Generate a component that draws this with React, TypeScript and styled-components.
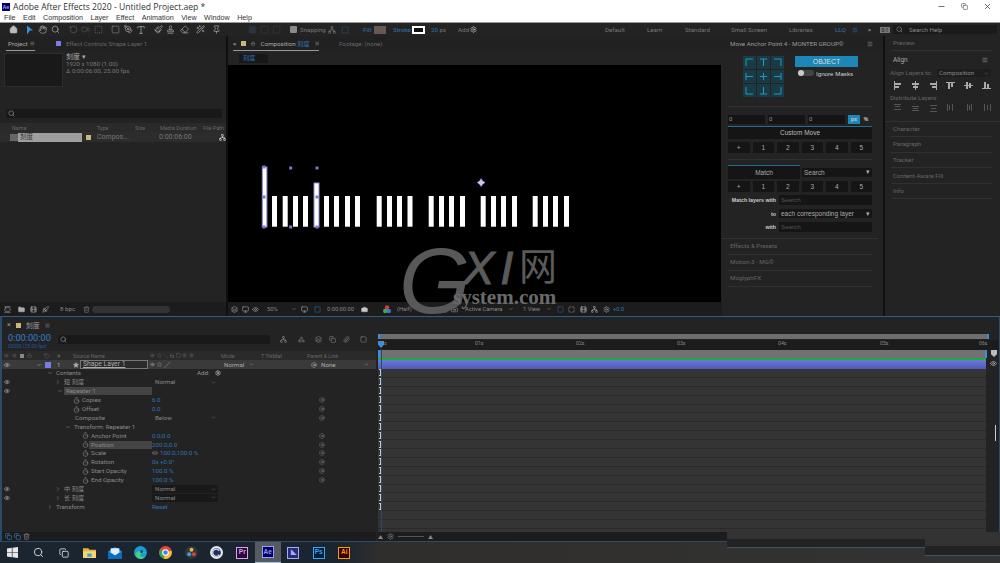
import React from "react";
import styled, { createGlobalStyle } from "styled-components";
import { Home, Hand, Search, RotateCcw, Video, Square, SquareDashed, PenTool, Type, Paintbrush, Stamp, Eraser, Pin, Settings, Menu, Camera, Lock, Eye, Folder, Trash2, Monitor, Film, Rocket, Minus, X, Copy, ChevronDown, ChevronRight, Star, Timer, Link2, Paperclip, Network, Layers, AtSign, WandSparkles, Tag, Shapes, GalleryVertical } from "lucide-react";

const Global = createGlobalStyle`
  html, body { margin: 0; padding: 0; background: #111; }
  * { box-sizing: border-box; }
  body { font-family: Roboto, "Noto Sans CJK SC", sans-serif; }
`;
const Root = styled.div`width:1000px;height:563px;overflow:hidden;display:flex;flex-direction:column;background:#0f0f0f;color:#8c8c8c;font-size:6.2px;position:relative;`;
const TitleBar = styled.div`height:12px;background:#fff;display:flex;align-items:center;padding:1px 0 0 2px;color:#333;font-family:"Open Sans",sans-serif;font-size:8.6px;gap:3px;flex:none;`;
const AeIcon = styled.span`width:8px;height:8px;background:#00005b;color:#99f;font-size:5px;font-weight:700;display:flex;align-items:center;justify-content:center;`;
const WinControls = styled.div`margin-left:auto;display:flex;gap:15px;padding-right:8px;color:#444;align-items:center;`;
const MenuBar = styled.div`height:11px;background:#fff;display:flex;align-items:center;padding-left:4px;gap:7.5px;color:#333;font-family:"Liberation Sans",sans-serif;font-size:7.2px;border-bottom:1px solid #999;flex:none;`;
const Toolbar = styled.div`height:13px;background:#232323;display:flex;align-items:center;padding-left:7px;color:#777;flex:none;`;
const Tool = styled.span<{ $w?: number; $c?: string }>`width:${p=>p.$w??12}px;display:flex;justify-content:center;align-items:center;color:${p=>p.$c??"#bbb"};flex:none;`;
const ToolSep = styled.span<{ $w: number }>`width:${p=>p.$w}px;flex:none;`;
const ToolLabel = styled.span<{ $w: number; $c?: string }>`width:${p=>p.$w}px;flex:none;white-space:nowrap;color:${p=>p.$c??"inherit"};`;
const BlueText = styled.span`color:#2f74b5;`;
const FillSwatch = styled.span`width:12px;height:8px;background:#6a5654;margin:0 7px 0 3px;flex:none;`;
const StrokeSwatch = styled.span`width:13px;height:8px;background:#111;border:2px solid #fff;margin:0 6px 0 1px;flex:none;`;
const Check = styled.span`width:7px;height:7px;background:#8a8a8a;border-radius:1px;margin-right:3px;flex:none;`;
const HelpBox = styled.div`width:104px;height:9px;background:#1a1a1a;display:flex;align-items:center;padding-left:3px;gap:6px;color:#888;margin:0 3px;flex:none;`;
const WorkTabs = styled.div`margin-left:auto;display:flex;align-items:center;color:#777;`;
const ZeroBox = styled.span`width:10px;height:6px;background:#777;color:#111;font-size:5px;line-height:6px;text-align:center;flex:none;`;

const Main = styled.div`height:280px;display:flex;background:#0f0f0f;flex:none;`;
const Panel = styled.div<{ $w: number; $ml?: number }>`width:${p=>p.$w}px;margin-left:${p=>p.$ml??0}px;flex:none;background:#232323;display:flex;flex-direction:column;position:relative;`;
const Tabs = styled.div`height:15px;display:flex;align-items:center;flex:none;background:#212121;`;
const Tab = styled.span<{ $active?: boolean; $w?: number; $gap?: number; $ml?: number }>`display:flex;align-items:center;justify-content:flex-start;gap:${p=>p.$gap??3}px;height:15px;padding-top:1px;margin-left:${p=>p.$ml??0}px;color:${p=>p.$active?"#aaa":"#666"};${p=>p.$w?`width:${p.$w}px;`:""}border-bottom:${p=>p.$active?"1px solid #999":"1px solid transparent"};flex:none;white-space:nowrap;`;
const TabName = styled.span`padding-left:2px;width:25px;`;
const Sq = styled.span<{ $c: string; $s?: number; $ml?: number }>`width:${p=>p.$s??5}px;height:${p=>p.$s??5}px;background:${p=>p.$c};margin-left:${p=>p.$ml??0}px;flex:none;`;
const ProjectInfo = styled.div`display:flex;height:36px;margin:2px 0 0 4px;gap:3px;flex:none;`;
const Thumb = styled.div`width:59px;height:34px;background:#191919;border:1px solid #2c2c2c;`;
const InfoText = styled.div`line-height:7px;color:#777;`;
const InfoTitle = styled.div`color:#aaa;font-size:7px;line-height:8px;`;
const SearchBar = styled.div<{ $w: number; $ml: number; $mt: number }>`width:${p=>p.$w}px;height:9px;margin:${p=>p.$mt}px 0 0 ${p=>p.$ml}px;background:#191919;display:flex;align-items:center;padding-left:2px;color:#999;flex:none;`;
const ProjHeader = styled.div`height:9px;margin-top:5px;background:#2a2a2a;display:grid;grid-template-columns:85px 38px 25px 43px 1fr;padding-left:12px;align-items:center;color:#666;font-size:5.4px;white-space:nowrap;flex:none;`;
const ProjRow = styled.div`height:10px;background:#2c2c2c;display:flex;align-items:center;padding-left:10px;color:#777;font-size:7px;flex:none;`;
const FolderTag = styled.span`width:8px;height:7px;background:#666;flex:none;`;
const ProjName = styled.span`width:64px;height:9px;background:#9f9f9f;color:#333;line-height:9px;padding-left:2px;font-size:6.5px;flex:none;`;
const ProjType = styled.span`width:62px;flex:none;margin-left:6px;`;
const ProjTime = styled.span`width:60px;flex:none;`;
const ProjBar = styled.div`margin-top:auto;height:14px;display:flex;align-items:center;padding-left:1px;background:#1c1c1c;color:#888;flex:none;`;
const BpcSlider = styled.span`width:78px;height:7px;border-radius:4px;background:#333;flex:none;`;

const CompSub = styled.div`height:14px;display:flex;align-items:center;padding-left:11px;flex:none;`;
const CompTab = styled.span`width:29px;height:9px;background:#181818;color:#2f74b5;line-height:9px;padding-left:4px;`;
const Viewer = styled.div`height:237px;width:493px;background:#000;flex:none;`;
const CompBar = styled.div`flex:1;display:flex;align-items:center;background:#1c1c1c;color:#888;font-size:5.8px;white-space:nowrap;`;
const Water = styled.div`position:absolute;color:#5a5a5a;line-height:1;white-space:nowrap;pointer-events:none;`;
const WaterG = styled(Water)`left:171px;top:199px;font-size:92px;font-family:"Liberation Sans",sans-serif;font-style:italic;color:#585858;`;
const WaterX = styled(Water)`left:235px;top:208px;font-size:47px;font-family:"Liberation Sans",sans-serif;font-style:italic;letter-spacing:6px;-webkit-text-stroke:1px #5a5a5a;`;
const WaterW = styled(Water)`left:291px;top:209px;font-size:38px;font-family:"Noto Sans CJK SC",sans-serif;`;
const WaterS = styled(Water)`left:225px;top:251px;font-size:21px;font-family:"Liberation Serif",serif;font-weight:700;color:#6a6a6a;`;

const MoveTitle = styled.div`height:15px;display:flex;align-items:center;justify-content:space-between;padding:0 10px 0 8px;color:#9a9a9a;flex:none;background:#212121;`;
const AnchorArea = styled.div`display:flex;height:56px;padding:5px 0 0 15px;gap:11px;border-bottom:1px solid #303030;margin:0 11px 0 6px;flex:none;`;
const AnchorGrid = styled.div`display:grid;grid-template-columns:repeat(3,13px);grid-template-rows:repeat(3,13px);gap:1px;align-self:flex-start;`;
const AnchorCell = styled.svg`width:13px;height:13px;background:#1a3a46;display:block;`;
const ObjectCol = styled.div`display:flex;flex-direction:column;`;
const ObjectBtn = styled.div`width:63px;height:11px;background:#1d87b5;color:#dcdcdc;font-family:"Liberation Sans",sans-serif;font-size:7px;line-height:11px;text-align:center;`;
const ToggleRow = styled.div`display:flex;align-items:center;gap:2px;margin:1px 0 0 3px;color:#d8d8d8;font-family:"Liberation Sans",sans-serif;font-size:6.2px;height:10px;white-space:nowrap;`;
const Toggle = styled.span`width:16px;height:6px;border-radius:3px;background:#444;position:relative;flex:none;&:before{content:"";position:absolute;left:0;top:0;width:6px;height:6px;border-radius:50%;background:#ccc;}`;
const MoveBody = styled.div`padding:0 11px 0 6px;font-family:"Liberation Sans",sans-serif;flex:none;`;
const InputsRow = styled.div`display:flex;height:9px;margin-top:8px;gap:3px;align-items:stretch;`;
const Num = styled.span`width:37px;background:#141414;color:#999;padding-left:1px;line-height:9px;font-size:6px;`;
const Unit = styled.span<{ $on?: boolean }>`width:12px;background:${p=>p.$on?"#1d87b5":"transparent"};color:#ccc;text-align:center;line-height:9px;font-size:5px;font-weight:700;margin-left:${p=>p.$on?0:-3}px;`;
const Teal = styled.div`height:1px;background:#1c6f8f;margin-top:2px;`;
const WideBtn = styled.div`height:12px;background:#151515;color:#bbb;text-align:center;line-height:12px;font-size:6.5px;`;
const NumRow = styled.div<{ $mt: number }>`display:flex;justify-content:space-between;margin-top:${p=>p.$mt}px;`;
const NumBtn = styled.span`width:21.5px;height:11px;background:#151515;color:#aaa;text-align:center;line-height:11px;font-size:6.5px;`;
const Div = styled.div<{ $mt: number }>`height:1px;background:#303030;margin-top:${p=>p.$mt}px;`;
const MatchRow = styled.div`display:flex;gap:2px;margin-top:5px;align-items:center;`;
const MatchTab = styled.div`width:72px;height:14px;background:#151515;border-top:1px solid #1c6f8f;color:#aaa;text-align:center;line-height:13px;font-size:6.5px;`;
const SelectBox = styled.div<{ $w: number }>`width:${p=>p.$w}px;height:9px;background:#151515;color:#aaa;display:flex;justify-content:space-between;align-items:center;padding:0 2px;font-size:6.5px;`;
const LabelRow = styled.div<{ $mt: number }>`display:flex;justify-content:flex-end;align-items:center;gap:3px;margin-top:${p=>p.$mt}px;`;
const SideLabel = styled.span`color:#ccc;font-size:5.3px;font-weight:700;white-space:nowrap;`;
const InputBox = styled.span`width:93px;height:9.5px;background:#151515;color:#555;padding-left:2px;font-size:6.2px;line-height:9.5px;`;
const Collapsed = styled.div<{ $h?: number }>`height:${p=>p.$h??16}px;border-bottom:1px solid #303030;display:flex;align-items:center;color:#666;padding-left:2px;flex:none;`;
const CollapsedWrap = styled.div`padding:0 6px 0 6px;flex:none;margin:6px 5px 0 0;border-top:1px solid #303030;`;

const R2Pad = styled.div`padding:0 8px 0 6px;flex:none;`;
const AlignBlock = styled.div`padding:4px 9px 0 5px;height:70.5px;border-bottom:1px solid #303030;flex:none;`;
const AlignHead = styled.div`display:flex;justify-content:space-between;color:#aaa;padding:0 3px;height:10px;align-items:center;font-size:6.5px;`;
const AlignRow = styled.div<{ $mt: number; $h: number }>`display:flex;align-items:center;height:${p=>p.$h}px;margin-top:${p=>p.$mt}px;color:#666;white-space:nowrap;`;
const AlignLabel = styled.span`width:47px;flex:none;`;
const AlignIcons = styled.div<{ $mt: number }>`display:flex;justify-content:space-between;padding:0 0 0 3px;margin-top:${p=>p.$mt}px;height:10px;`;
const AIcon = styled.svg`width:9px;height:9px;display:block;`;
const AlignSel = styled.span`width:55px;height:8px;background:#1d1d1d;color:#888;display:flex;justify-content:space-between;align-items:center;padding:0 2px;`;

const Timeline = styled.div`height:225px;background:#232323;border-top:1px solid #2a5f8a;border-left:2px solid #2a4b6c;border-right:1px solid #2a4b6c;display:flex;flex-direction:column;flex:none;position:relative;`;
const TlTab = styled.div`height:16px;display:flex;align-items:center;padding-left:5px;gap:5px;color:#999;font-size:7px;flex:none;`;
const TlTop = styled.div`height:18px;display:flex;flex:none;`;
const TlCols = styled.div`flex:1;display:flex;min-height:0;`;
const TlLeft = styled.div`width:374px;flex:none;display:flex;flex-direction:column;`;
const TlRight = styled.div`flex:1;display:flex;flex-direction:column;margin-left:2px;position:relative;`;
const TimeBox = styled.div`width:56px;flex:none;padding-left:6px;color:#2f7fd0;font-size:9.2px;line-height:10px;white-space:nowrap;`;
const TimeSub = styled.div`font-size:4.9px;line-height:6px;color:#25599a;`;
const TlIcons = styled.div`display:flex;margin-left:7px;color:#888;align-items:center;height:13px;`;
const LayerGrid = styled.div`display:grid;grid-template-columns:40px 15px 16px 77px 71px 40px 46px 1fr;align-items:center;flex:none;`;
const HeadRow = styled(LayerGrid)`height:9px;background:#2a2a2a;color:#666;font-size:5.3px;white-space:nowrap;`;
const LayerRow = styled(LayerGrid)`height:9px;background:#3a3a3a;color:#aaa;`;
const Cell = styled.span<{ $pl?: number; $gap?: number }>`display:flex;align-items:center;gap:${p=>p.$gap??2}px;padding-left:${p=>p.$pl??0}px;min-width:0;white-space:nowrap;`;
const ChevEnd = styled.span`margin-left:24px;display:flex;`;
const LayerName = styled.span`width:68px;height:9px;border:1px solid #777;color:#aaa;font-size:6.8px;line-height:6px;padding-left:2px;text-decoration:underline;background:#2b2b2b;white-space:nowrap;flex:none;`;
const PropRow = styled.div`height:8.9px;display:grid;grid-template-columns:14px 136px 167px 1fr;align-items:center;color:#8a8a8a;font-size:6.2px;flex:none;white-space:nowrap;`;
const EyeCell = styled.span`display:flex;padding-left:2px;color:#bbb;`;
const NameCell = styled.span<{ $pl: number }>`display:flex;align-items:center;padding-left:${p=>p.$pl}px;height:8px;`;
const IconSlot = styled.span`width:8px;display:flex;justify-content:center;flex:none;color:#888;`;
const NameText = styled.span<{ $bg?: boolean }>`flex:1;height:8px;line-height:8px;padding-left:2px;${p=>p.$bg?"background:#444;":""}`;
const ValCell = styled.span`color:#2f74b5;display:flex;align-items:center;gap:2px;`;
const AddLabel = styled.span`margin-left:45px;color:#999;display:flex;align-items:center;gap:5px;`;
const PropSelect = styled.span<{ $dark?: boolean }>`width:66px;height:8px;background:${p=>p.$dark?"#191919":"transparent"};color:#888;display:flex;align-items:center;justify-content:space-between;padding:0 2px 0 3px;`;
const LinkCell = styled.span`color:#777;display:flex;`;
const TlFoot = styled.div`height:9px;margin-top:auto;background:#1c1c1c;display:flex;align-items:center;gap:2px;padding-left:3px;color:#3a88c8;flex:none;`;
const WorkBar = styled.div`height:5px;margin:1px 10px 0 0;background:#6e6e6e;position:relative;flex:none;&:before,&:after{content:"";position:absolute;top:0;width:2px;height:5px;background:#3a8ee0;}&:before{left:0;}&:after{right:0;}`;
const Ruler = styled.div`height:10px;position:relative;flex:none;background:#1c1c1c;color:#888;font-size:5.2px;margin-top:1px;`;
const Tick = styled.span<{ $x: number }>`position:absolute;left:${p=>p.$x}px;top:0;`;
const Playhead = styled.span`position:absolute;left:0;top:1px;width:6px;height:7px;background:#3a8ee0;clip-path:polygon(0 0,100% 0,100% 55%,50% 100%,0 55%);`;
const PlayLine = styled.span`position:absolute;left:3px;top:16px;bottom:9px;width:1px;background:#2a4b6c;`;
const GreyBar = styled.div`height:8px;background:#717171;margin-right:13px;flex:none;position:relative;&:before,&:after{content:"";position:absolute;top:0;width:2px;height:8px;background:#3a8ee0;}&:before{left:0;}&:after{right:-1px;}`;
const GreenLine = styled.div`height:1.5px;background:#1faa3e;margin-right:13px;flex:none;`;
const LayerBar = styled.div`height:9.5px;margin-right:13px;background:linear-gradient(#6a78d8,#4e5cb8);flex:none;`;
const Tracks = styled.div`flex:1;margin-right:13px;background:#343434;display:flex;flex-direction:column;min-height:0;overflow:hidden;`;
const TrackRow = styled.div`height:8.9px;border-bottom:1px solid #2a2a2a;padding-left:1px;flex:none;display:flex;align-items:center;`;
const IBeam = styled.svg`width:3px;height:7px;display:block;flex:none;`;
const FootRight = styled.div`height:9px;background:#1c1c1c;display:flex;align-items:center;gap:4px;padding-left:0;color:#888;flex:none;font-size:5px;`;
const ZoomLine = styled.span`width:26px;height:1px;background:#555;`;
const ScrollThumb = styled.span`position:absolute;right:0;top:92px;width:4px;height:16px;background:#222;border-left:1px solid #ccc;`;
const MarkerA = styled.span`position:absolute;right:2px;top:17px;width:6px;height:7px;background:#bbb;clip-path:polygon(0 0,100% 0,100% 60%,50% 100%,0 60%);`;
const MarkerB = styled.span`position:absolute;right:2px;top:27px;color:#ccc;display:flex;`;
const Taskbar = styled.div`height:22px;background:linear-gradient(90deg,#1b2530 0,#1b2530 34%,#2f2e2c 38%,#333 100%);display:flex;align-items:center;border-top:1px solid #2a4b6c;flex:none;`;
const TaskSlot = styled.span<{ $active?: boolean }>`width:25.5px;height:21px;display:flex;align-items:center;justify-content:center;flex:none;${p=>p.$active?"background:#555b60;border-bottom:1px solid #a9c4d8;":""}`;
const AppTile = styled.span<{ $bg: string; $c: string }>`width:12px;height:12px;background:${p=>p.$bg};border:1px solid ${p=>p.$c};color:${p=>p.$c};font-size:6.5px;font-family:"Liberation Sans",sans-serif;font-weight:700;display:flex;align-items:center;justify-content:center;line-height:1;`;
const PatchA = styled.span`position:absolute;left:727px;top:532px;width:198px;height:16px;background:linear-gradient(#333 0 7px,#222 7px 15px,#3f5468 15px 16px);`;
const PatchB = styled.span`position:absolute;left:925px;top:532px;width:75px;height:24px;background:linear-gradient(#333 0 14px,#222 14px 23px,#3f5468 23px 24px);`;

const ic = (I: any, s = 9, extra: any = {}) => <I size={s} strokeWidth={1.6} {...extra} />;

const shortBars = [44,54.7,65,75, 96,106,117,127, 148.7,159,169,179.5, 200.7,211,221,232, 252.7,263,273,284, 304.7,315,325,336];
const handles = [[36,102],[36,132],[36,162],[62.7,103],[62.7,162],[89,103],[89,132],[89,162]];
const Bars: React.FC = () => (
  <svg width="493" height="237" style={{ display: "block" }}>
    <rect x="34.3" y="102" width="4.6" height="60" fill="#fff"/>
    <rect x="86" y="118" width="5" height="44" fill="#fff"/>
    {shortBars.map((x, i) => <rect key={i} x={x} y="131" width="5" height="30.7" fill="#fff"/>)}
    <g stroke="#8d8ddb" strokeWidth="1" fill="none">
      <rect x="34.3" y="102" width="4.6" height="60"/><rect x="86" y="118" width="5" height="44"/>
    </g>
    <g fill="#7b7bd0">{handles.map(([x,y],i)=><rect key={i} x={x-1.5} y={y-1.5} width="3" height="3"/>)}</g>
    <path d="M251.5 116l1.6-2.4 1.6 2.4 2.4 1.6-2.4 1.6-1.6 2.4-1.6-2.4-2.4-1.6z" fill="#c8c8ee" stroke="#8d8ddb" strokeWidth=".6"/>
  </svg>
);

const Win = () => <svg width="11" height="11" viewBox="0 0 10 10" fill="#e8e8e8"><path d="M0 1.3l4.4-.6v4H0zM5 .6L10 0v4.7H5zM0 5.3h4.4v4L0 8.7zM5 5.3h5V10l-5-.7z"/></svg>;
const Explorer = () => <svg width="13" height="12" viewBox="0 0 12 11"><path d="M0 1h5l1 1.5h6V10H0z" fill="#e8b33a"/><rect y="4" width="12" height="6" fill="#f7d774"/><rect x="4" y="6" width="4" height="3" fill="#3aa0d8"/></svg>;
const Mail = () => <svg width="14" height="12" viewBox="0 0 13 11"><path d="M0 4l6.5-4L13 4v7H0z" fill="#1a8fdc"/><path d="M0 4l6.5 4L13 4v7H0z" fill="#0f6cbd"/><path d="M2.5 1h8v4l-4 2.5-4-2.5z" fill="#dff0fb"/></svg>;
const Edge = () => <svg width="13" height="13" viewBox="0 0 12 12"><circle cx="6" cy="6" r="6" fill="#1a9ad6"/><path d="M1 8c1-4 8-5 10-1-1-1-5-1-5 1s3 3 5 1c-2 4-8 4-10-1z" fill="#45d07a"/><circle cx="7" cy="5" r="1.4" fill="#0c4a8a"/></svg>;
const Chrome = () => <svg width="13" height="13" viewBox="0 0 12 12"><circle cx="6" cy="6" r="6" fill="#e04a3c"/><path d="M6 6L1 3.2A6 6 0 0 0 4.5 11.8z" fill="#2fa84f"/><path d="M6 6l5.6-1.6A6 6 0 0 1 4.5 11.8z" fill="#f6c02c"/><circle cx="6" cy="6" r="2.6" fill="#3f82ed" stroke="#fff"/></svg>;
const Davinci = () => <svg width="13" height="13" viewBox="0 0 12 12"><circle cx="6" cy="6" r="6" fill="#33363c"/><circle cx="6" cy="3.5" r="1.8" fill="#e8b93a"/><circle cx="3.8" cy="7.5" r="1.8" fill="#3aa3df"/><circle cx="8.2" cy="7.5" r="1.8" fill="#d6453c"/></svg>;
const C4d = () => <svg width="13" height="13" viewBox="0 0 12 12"><circle cx="6" cy="6" r="6" fill="#e8e8e8"/><circle cx="6" cy="6" r="4" fill="#1b2f66"/><path d="M8.5 4.5A3.2 3.2 0 1 0 8.5 8" stroke="#e8e8e8" fill="none"/></svg>;
const ColorWheel = () => <svg width="8" height="9" viewBox="0 0 8 9"><circle cx="4" cy="2.4" r="2.2" fill="#d63c3c"/><circle cx="2.2" cy="6" r="2.2" fill="#3fae4e"/><circle cx="5.8" cy="6" r="2.2" fill="#3a78d8"/></svg>;

const anchors = ["M3 10V3h7","M3 3h7M6.5 3v7","M3 3h7v7","M3 3v7M3 6.5h7","M3 6.5h7M6.5 3v7","M10 3v7M3 6.5h7","M3 3v7h7","M3 10h7M6.5 3v7","M3 10h7V3"];
const alignPaths = ["M1 0h1v9H1zM2 2h6v2H2zM2 5h4v2H2z","M4 0h1v9H4zM1 2h7v2H1zM2 5h5v2H2z","M7 0h1v9H7zM1 2h6v2H1zM3 5h4v2H3z","M0 1h9v1H0zM2 2h2v6H2zM5 2h2v4H5z","M0 4h9v1H0zM2 1h2v7H2zM5 2h2v5H5z","M0 7h9v1H0zM2 1h2v6H2zM5 3h2v4H5z"];
const distPaths = ["M1 1h7v1H1zM2 3h5v1H2zM1 6h7v1H1z","M1 3h7v1H1zM2 5h5v1H2zM1 7h7v1H1z","M1 2h7v1H1zM2 5h5v1H2zM1 8h7v1H1z","M1 1h1v7H1zM3 2h1v5H3zM6 1h1v7H6z","M3 1h1v7H3zM5 2h1v5H5zM7 1h1v7H7z","M2 1h1v7H2zM5 2h1v5H5zM8 1h1v7H8z"];
const numKeys = ["+","1","2","3","4","5"];

type Ico = "down" | "right" | "timer" | "none";
type P = { pl: number; ico: Ico; n: string; v?: React.ReactNode; sel?: string; dark?: boolean; link?: boolean; eye?: boolean; bg?: boolean; add?: boolean };
const rows: P[] = [
  { pl: 30, ico: "down", n: "Contents", add: true },
  { pl: 38, ico: "right", n: "短 刻度", sel: "Normal", eye: true },
  { pl: 40, ico: "down", n: "Repeater 1", eye: true, bg: true },
  { pl: 56, ico: "timer", n: "Copies", v: "6.0", link: true },
  { pl: 56, ico: "timer", n: "Offset", v: "0.0", link: true },
  { pl: 57, ico: "none", n: "Composite", sel: "Below", link: true },
  { pl: 48, ico: "down", n: "Transform: Repeater 1" },
  { pl: 65, ico: "timer", n: "Anchor Point", v: "0.0,0.0", link: true },
  { pl: 65, ico: "timer", n: "Position", v: "200.0,0.0", link: true, bg: true },
  { pl: 65, ico: "timer", n: "Scale", v: <><Link2 size={6} color="#999"/> 100.0,100.0 %</>, link: true },
  { pl: 65, ico: "timer", n: "Rotation", v: "0x +0.0°", link: true },
  { pl: 65, ico: "timer", n: "Start Opacity", v: "100.0 %", link: true },
  { pl: 65, ico: "timer", n: "End Opacity", v: "100.0 %", link: true },
  { pl: 38, ico: "right", n: "中 刻度", sel: "Normal", dark: true, eye: true },
  { pl: 38, ico: "right", n: "长 刻度", sel: "Normal", dark: true, eye: true },
  { pl: 30, ico: "right", n: "Transform", v: "Reset" },
];
const icoFor = (k: Ico) => k === "down" ? <ChevronDown size={6}/> : k === "right" ? <ChevronRight size={6}/> : k === "timer" ? <Timer size={7}/> : null;

const App: React.FC = () => (
  <Root>
    <Global />
    <TitleBar><AeIcon>Ae</AeIcon>Adobe After Effects 2020 - Untitled Project.aep *
      <WinControls><Minus size={9}/><Copy size={7}/><X size={9}/></WinControls>
    </TitleBar>
    <MenuBar>{["File","Edit","Composition","Layer","Effect","Animation","View","Window","Help"].map(m => <span key={m}>{m}</span>)}</MenuBar>
    <Toolbar>
      <Tool>{ic(Home, 9, { fill: "#bbb" })}</Tool><ToolSep $w={5}/>
      <Tool $c="#3b8fdc"><svg width="8" height="10" viewBox="0 0 8 9"><path d="M1 0l6 5H4l-3 4z" fill="currentColor"/></svg></Tool>
      <Tool>{ic(Hand, 9)}</Tool><ToolSep $w={1}/><Tool>{ic(Search, 9)}</Tool><ToolSep $w={6}/>
      <Tool $c="#666">{ic(RotateCcw, 9)}</Tool><Tool $c="#555">{ic(Video, 9)}</Tool><ToolSep $w={1}/><Tool $c="#777">{ic(SquareDashed, 9)}</Tool><ToolSep $w={5}/>
      <Tool $c="#888">{ic(Square, 9)}</Tool><ToolSep $w={1}/><Tool>{ic(PenTool, 9)}</Tool><ToolSep $w={1}/><Tool>{ic(Type, 10)}</Tool><ToolSep $w={5}/>
      <Tool>{ic(Paintbrush, 9)}</Tool><Tool>{ic(Stamp, 9)}</Tool><ToolSep $w={2}/><Tool>{ic(Eraser, 9)}</Tool><ToolSep $w={4}/>
      <Tool>{ic(WandSparkles, 9)}</Tool><ToolSep $w={4}/><Tool>{ic(Pin, 9)}</Tool><ToolSep $w={24}/>
      <Tool $c="#2b3540">{ic(Square, 9, { fill: "#2b3540" })}</Tool><Tool $c="#3a3a3a">{ic(Square, 9)}</Tool><Tool $c="#3a3a3a">{ic(Square, 9)}</Tool><ToolSep $w={8}/>
      <Check/><ToolLabel $w={26}>Snapping</ToolLabel>
      <Tool $c="#888">{ic(Network, 8)}</Tool><ToolSep $w={1}/><Tool $c="#2f74b5">{ic(SquareDashed, 8)}</Tool><ToolSep $w={12}/>
      <ToolLabel $w={8} $c="#2f74b5">Fill:</ToolLabel><FillSwatch/><ToolLabel $w={18} $c="#2f74b5">Stroke:</ToolLabel><StrokeSwatch/>
      <ToolLabel $w={14}><BlueText>20</BlueText> px</ToolLabel><ToolSep $w={13}/><ToolLabel $w={12}>Add:</ToolLabel><Settings size={7} color="#ccc"/>
      <WorkTabs>
        <ToolLabel $w={42}>Default</ToolLabel><ToolLabel $w={38}>Learn</ToolLabel><ToolLabel $w={46}>Standard</ToolLabel><ToolLabel $w={58}>Small Screen</ToolLabel><ToolLabel $w={46}>Libraries</ToolLabel>
        <ToolLabel $w={16} $c="#2f74b5">LLQ</ToolLabel><Tool $w={8} $c="#2f74b5"><Menu size={6}/></Tool><Tool $w={21}>»</Tool>
        <ZeroBox>0:1</ZeroBox>
        <HelpBox><Search size={7}/>Search Help</HelpBox>
      </WorkTabs>
    </Toolbar>
    <Main>
      <Panel $w={226}>
        <Tabs>
          <Tab $active $w={29} $ml={6} $gap={1}><TabName>Project</TabName><Menu size={5}/></Tab>
          <Tab $ml={21} $gap={5}><Sq $c="#7a7ae8"/> Effect Controls Shape Layer 1</Tab>
        </Tabs>
        <ProjectInfo>
          <Thumb/>
          <InfoText><InfoTitle>刻度 ▾</InfoTitle>1920 x 1080 (1.00)<br/>Δ 0:00:06:00, 25.00 fps</InfoText>
        </ProjectInfo>
        <SearchBar $w={216} $ml={6} $mt={20}><Search size={7}/></SearchBar>
        <ProjHeader><span>Name</span><span>Type</span><span>Size</span><span>Media Duration</span><span>File Path</span></ProjHeader>
        <ProjRow><FolderTag/><ProjName>刻度</ProjName><Sq $c="#c8b67a" $s={5} $ml={4}/><ProjType>Compos...</ProjType><ProjTime>0:00:06:00</ProjTime><Network size={7} color="#ddd"/></ProjRow>
        <ProjBar>
          <Tool>{ic(GalleryVertical,7)}</Tool><ToolSep $w={2}/><Tool>{ic(Folder,7,{fill:"#aaa"})}</Tool><Tool>{ic(Film,7)}</Tool><Tool>{ic(Rocket,7)}</Tool>
          <ToolSep $w={9}/><ToolLabel $w={20}>8 bpc</ToolLabel><Tool $c="#888">{ic(Trash2,7)}</Tool><BpcSlider/>
        </ProjBar>
      </Panel>
      <Panel $w={494} $ml={2}>
        <Tabs>
          <Tab $active $w={86} $ml={5} $gap={5}>× <Sq $c="#c8b67a"/><Lock size={5}/> <span>Composition <BlueText>刻度</BlueText></span> <Menu size={5}/></Tab>
          <Tab $ml={20}>Footage: (none)</Tab>
        </Tabs>
        <CompSub><CompTab>刻度</CompTab></CompSub>
        <Viewer><Bars/></Viewer>
        <CompBar>
          <Tool>{ic(Layers,7)}</Tool><Tool $w={10}>{ic(Monitor,7)}</Tool><Tool $w={10}>{ic(Eye,7)}</Tool><ToolSep $w={7}/><ToolLabel $w={10}>50%</ToolLabel>
          <ToolSep $w={14}/><ChevronDown size={6}/><Tool $w={14}>{ic(Monitor,7)}</Tool><Tool $c="#2f74b5">{ic(Square,7)}</Tool>
          <ToolSep $w={4}/><ToolLabel $w={26}>0:00:00:00</ToolLabel><ToolSep $w={5}/><Tool>{ic(Camera,7,{fill:"#ccc"})}</Tool><ToolSep $w={10}/><Tool $w={14}><ColorWheel/></Tool><ToolSep $w={3}/><ToolLabel $w={15}>(Half)</ToolLabel>
          <ToolSep $w={27}/><Tool $w={10}>{ic(Square,7)}</Tool><Tool $w={11}>{ic(Camera,7)}</Tool><ToolSep $w={5}/><ToolLabel $w={38}>Active Camera</ToolLabel><ToolSep $w={5}/><ChevronDown size={6}/><ToolSep $w={9}/><ToolLabel $w={16}>1 View</ToolLabel><ToolSep $w={7}/><ChevronDown size={6}/><ToolSep $w={3}/>
          <Tool $w={10} $c="#2f74b5">{ic(Square,7)}</Tool><Tool>{ic(SquareDashed,7)}</Tool><Tool>{ic(Film,7)}</Tool><Tool $w={10}>{ic(Network,7)}</Tool><Tool $w={14}>{ic(Settings,7)}</Tool><ToolLabel $w={14} $c="#2f74b5">+0.0</ToolLabel>
        </CompBar>
        <WaterG>G</WaterG><WaterX>XI</WaterX><WaterW>网</WaterW><WaterS>system.com</WaterS>
      </Panel>
      <Panel $w={161}>
        <MoveTitle><span>Move Anchor Point 4 - MONTER GROUP©</span><Menu size={6}/></MoveTitle>
        <AnchorArea>
          <AnchorGrid>{anchors.map((d,i)=><AnchorCell key={i} viewBox="0 0 13 13"><path d={d} stroke="#1f9ab8" fill="none"/></AnchorCell>)}</AnchorGrid>
          <ObjectCol><ObjectBtn>OBJECT</ObjectBtn><ToggleRow><Toggle/>Ignore Masks</ToggleRow></ObjectCol>
        </AnchorArea>
        <MoveBody>
          <InputsRow><Num>0</Num><Num>0</Num><Num>0</Num><Unit $on>px</Unit><Unit>%</Unit></InputsRow>
          <Teal/>
          <WideBtn>Custom Move</WideBtn>
          <NumRow $mt={3}>{numKeys.map(k=><NumBtn key={k}>{k}</NumBtn>)}</NumRow>
          <Div $mt={6}/>
          <MatchRow><MatchTab>Match</MatchTab><SelectBox $w={70}>Search<span>▾</span></SelectBox></MatchRow>
          <NumRow $mt={2}>{numKeys.map(k=><NumBtn key={k}>{k}</NumBtn>)}</NumRow>
          <LabelRow $mt={3}><SideLabel>Match layers with</SideLabel><InputBox>Search</InputBox></LabelRow>
          <LabelRow $mt={4.5}><SideLabel>to</SideLabel><SelectBox $w={93}>each corresponding layer<span>▾</span></SelectBox></LabelRow>
          <LabelRow $mt={4}><SideLabel>with</SideLabel><InputBox>Search</InputBox></LabelRow>
        </MoveBody>
        <CollapsedWrap>
          <Collapsed>Effects &amp; Presets</Collapsed><Collapsed>Motion-3 - MG©</Collapsed><Collapsed>MoglyphFX</Collapsed>
        </CollapsedWrap>
      </Panel>
      <Panel $w={115} $ml={2}>
        <R2Pad><Collapsed $h={15}>Preview</Collapsed></R2Pad>
        <AlignBlock>
          <AlignHead><span>Align</span><Menu size={6}/></AlignHead>
          <AlignRow $mt={3} $h={10}><AlignLabel>Align Layers to:</AlignLabel><AlignSel>Composition<ChevronDown size={5}/></AlignSel></AlignRow>
          <AlignIcons $mt={3}>{alignPaths.map((d,i)=><AIcon key={i} viewBox="0 0 9 9"><path d={d} fill="#aaa"/></AIcon>)}</AlignIcons>
          <AlignRow $mt={2} $h={9}>Distribute Layers:</AlignRow>
          <AlignIcons $mt={1}>{distPaths.map((d,i)=><AIcon key={i} viewBox="0 0 9 9"><path d={d} fill="#555"/></AIcon>)}</AlignIcons>
        </AlignBlock>
        <R2Pad>
          {["Character","Paragraph","Tracker","Content-Aware Fill","Info"].map(t=><Collapsed key={t} $h={15.6}>{t}</Collapsed>)}
        </R2Pad>
      </Panel>
    </Main>
    <Timeline>
      <TlTab><span>×</span><Sq $c="#c8b67a"/><span>刻度</span><Menu size={5}/></TlTab>
      <TlCols>
        <TlLeft>
          <TlTop>
            <TimeBox>0:00:00:00<TimeSub>00000 (25.00 fps)</TimeSub></TimeBox>
            <SearchBar $w={212} $ml={0} $mt={2}><Search size={7}/></SearchBar>
            <TlIcons>
              <Tool $c="#999">{ic(Network,7)}</Tool><ToolSep $w={6}/><Tool $c="#999">{ic(Shapes,7)}</Tool><ToolSep $w={5}/><Tool $c="#999">{ic(Layers,7)}</Tool><ToolSep $w={2}/><Tool $c="#999">{ic(Copy,7)}</Tool><ToolSep $w={2}/><Tool $c="#999">{ic(Paperclip,7)}</Tool><ToolSep $w={5}/><Tool $c="#999">{ic(Square,7)}</Tool>
            </TlIcons>
          </TlTop>
          <HeadRow>
            <Cell $pl={2} $gap={3}><Eye size={5}/><Eye size={5}/><Sq $c="#888" $s={4}/><Lock size={5}/></Cell>
            <Cell $pl={2}><Tag size={6}/></Cell><Cell>#</Cell><Cell>Source Name</Cell>
            <Cell $gap={1.5}><Eye size={5}/><Star size={5}/><span>╲</span><span>fx</span><Square size={5}/><Settings size={5}/><Settings size={5}/></Cell>
            <Cell>Mode</Cell><Cell>T TrkMat</Cell><Cell>Parent &amp; Link</Cell>
          </HeadRow>
          <LayerRow>
            <Cell $pl={2} $gap={26}><Eye size={6} color="#bbb"/><ChevronDown size={6}/></Cell>
            <Cell $pl={3}><Sq $c="#7a7ae8" $s={6}/></Cell>
            <Cell>1</Cell>
            <Cell $gap={1}><Star size={6} fill="#aaa"/><LayerName>Shape Layer 1</LayerName></Cell>
            <Cell $gap={2}><Eye size={5}/><Star size={5}/>╱</Cell>
            <Cell $pl={3} $gap={5}>Normal<ChevronDown size={5}/></Cell>
            <Cell/>
            <Cell $pl={4} $gap={4}><AtSign size={6}/>None<ChevronEndIcon/></Cell>
          </LayerRow>
          {rows.map((r,i)=>(
            <PropRow key={i}>
              <EyeCell>{r.eye && <Eye size={6}/>}</EyeCell>
              <NameCell $pl={r.pl}>{r.ico !== "none" && <IconSlot>{icoFor(r.ico)}</IconSlot>}<NameText $bg={r.bg}>{r.n}</NameText></NameCell>
              <ValCell>
                {r.v}
                {r.sel && <PropSelect $dark={r.dark}>{r.sel}<ChevronDown size={5}/></PropSelect>}
                {r.add && <AddLabel>Add:<Settings size={6} color="#ddd"/></AddLabel>}
              </ValCell>
              <LinkCell>{r.link && <AtSign size={6}/>}</LinkCell>
            </PropRow>
          ))}
          <TlFoot><Copy size={7}/><Copy size={7}/><Trash2 size={7} color="#888"/></TlFoot>
        </TlLeft>
        <TlRight>
          <WorkBar/>
          <Ruler>
            <Playhead/>
            {([["0s",3],["01s",97],["02s",198],["03s",299],["04s",400],["05s",502],["06s",601]] as [string,number][]).map(([t,x])=><Tick key={t} $x={x}>{t}</Tick>)}
          </Ruler>
          <GreyBar/><GreenLine/><LayerBar/>
          <Tracks>
            {rows.map((_,i)=><TrackRow key={i}><IBeam viewBox="0 0 3 7"><path d="M0 .5h3M0 6.5h3M1.5 0v7" stroke="#c8c8c8" strokeWidth="1"/></IBeam></TrackRow>)}
            <TrackRow/><TrackRow/><TrackRow/>
          </Tracks>
          <FootRight><span>▲</span><Settings size={7}/><ZoomLine/><span>▲</span></FootRight>
          <PlayLine/><MarkerA/><MarkerB><Eye size={7}/></MarkerB><ScrollThumb/>
        </TlRight>
      </TlCols>
    </Timeline>
    <Taskbar>
      <TaskSlot><Win/></TaskSlot><TaskSlot><Search size={11} color="#ddd"/></TaskSlot><TaskSlot><Copy size={10} color="#ddd"/></TaskSlot>
      <TaskSlot><Explorer/></TaskSlot><TaskSlot><Mail/></TaskSlot><TaskSlot><Edge/></TaskSlot><TaskSlot><Chrome/></TaskSlot><TaskSlot><Davinci/></TaskSlot><TaskSlot><C4d/></TaskSlot>
      <TaskSlot><AppTile $bg="#2a0a3a" $c="#d9a0f0">Pr</AppTile></TaskSlot>
      <TaskSlot $active><AppTile $bg="#00005b" $c="#99f">Ae</AppTile></TaskSlot>
      <TaskSlot><AppTile $bg="#2a2a7a" $c="#a9a9f0">◣</AppTile></TaskSlot>
      <TaskSlot><AppTile $bg="#001e36" $c="#31a8ff">Ps</AppTile></TaskSlot>
      <TaskSlot><AppTile $bg="#330000" $c="#ff9a00">Ai</AppTile></TaskSlot>
    </Taskbar>
    <PatchA/><PatchB/>
  </Root>
);
function ChevronEndIcon() { return <ChevEnd><ChevronDown size={5}/></ChevEnd>; }
export default App;
